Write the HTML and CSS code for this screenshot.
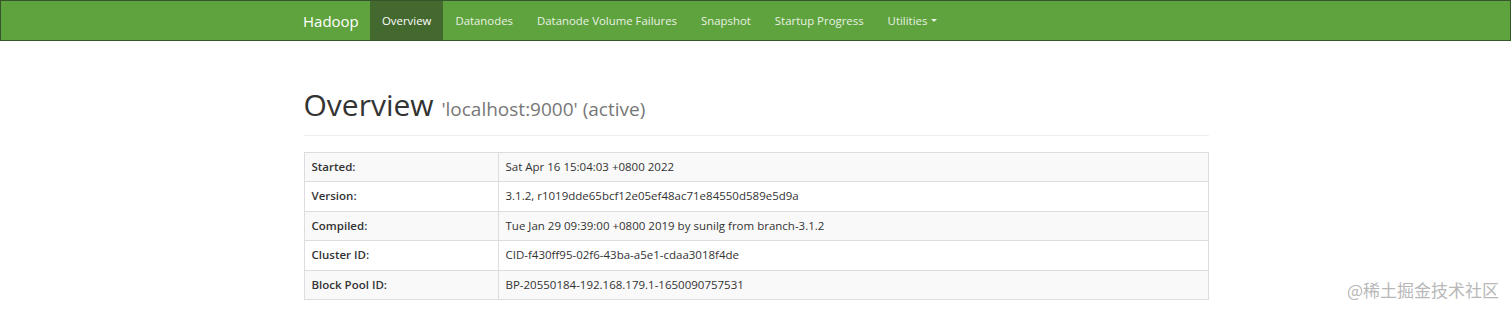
FILE: index.html
```html
<!DOCTYPE html>
<html lang="en">
<head>
    <meta charset="UTF-8">
    <title>Namenode information</title>
    <link rel="stylesheet" href="styles.css">
</head>
<body>
    <header class="navbar">
        <div class="container nav-inner">
            <a class="brand" href="#">Hadoop</a>
            <ul class="nav">
                <li class="active"><a href="#">Overview</a></li>
                <li><a href="#">Datanodes</a></li>
                <li><a href="#">Datanode Volume Failures</a></li>
                <li><a href="#">Snapshot</a></li>
                <li><a href="#">Startup Progress</a></li>
                <li><a href="#">Utilities <span class="caret"></span></a></li>
            </ul>
        </div>
    </header>

    <main class="container">
        <div class="page-header">
            <h1>Overview <small>'localhost:9000' (active)</small></h1>
        </div>

        <table class="table">
            <tr><th>Started:</th><td>Sat Apr 16 15:04:03 +0800 2022</td></tr>
            <tr><th>Version:</th><td>3.1.2, r1019dde65bcf12e05ef48ac71e84550d589e5d9a</td></tr>
            <tr><th>Compiled:</th><td>Tue Jan 29 09:39:00 +0800 2019 by sunilg from branch-3.1.2</td></tr>
            <tr><th>Cluster ID:</th><td>CID-f430ff95-02f6-43ba-a5e1-cdaa3018f4de</td></tr>
            <tr><th>Block Pool ID:</th><td>BP-20550184-192.168.179.1-1650090757531</td></tr>
        </table>
    </main>

    <div class="watermark">@稀土掘金技术社区</div>
</body>
</html>
```

FILE: styles.css
```css
body {
    margin: 0;
    font-family: 'Open Sans', 'Noto Sans', sans-serif;
    font-size: 11.5px;
    color: #333;
    background: #fff;
    position: relative;
    height: 314px;
    overflow: hidden;
}

.container {
    width: 905px;
    margin: 0 auto;
}

/* navbar */
.navbar {
    background-color: #5fa33e;
    border: 1px solid #36552a;
    height: 39px;
    margin-right: 1px;
}

.nav-inner {
    display: flex;
    align-items: stretch;
    height: 39px;
}

.brand {
    color: #fff;
    font-size: 15px;
    text-decoration: none;
    display: flex;
    align-items: center;
    width: 67px;
}

.nav {
    list-style: none;
    margin: 0;
    padding: 0;
    display: flex;
    font-size: 11.4px;
}

.nav li a {
    display: flex;
    align-items: center;
    height: 100%;
    padding: 0 12px;
    color: #e8f1e2;
    text-decoration: none;
}

.nav li.active a {
    background-color: #44692f;
    color: #fff;
}

.caret {
    display: inline-block;
    width: 0;
    height: 0;
    margin-left: 4px;
    border-top: 3px solid #e8f1e2;
    border-left: 3px solid transparent;
    border-right: 3px solid transparent;
}

/* heading */
.page-header {
    margin-top: 47px;
    padding-bottom: 9px;
    border-bottom: 1px solid #eee;
    margin-bottom: 16px;
}

.page-header h1 {
    margin: 0;
    font-weight: 400;
    font-size: 30px;
    line-height: 34px;
    color: #333;
}

.page-header small {
    font-size: 19px;
    color: #777;
}

/* table */
.table {
    width: 100%;
    border-collapse: collapse;
    border: 1px solid #ddd;
}

.table th,
.table td {
    border: 1px solid #ddd;
    padding: 6px 7px;
    line-height: 16.4px;
    text-align: left;
}

.table th {
    width: 179px;
    font-weight: 600;
}

.table tr:nth-child(odd) {
    background-color: #f9f9f9;
}

.watermark {
    position: absolute;
    right: 13px;
    bottom: 12px;
    font-family: 'Noto Sans CJK SC', sans-serif;
    font-size: 17px;
    color: #b8b8b8;
}
```
